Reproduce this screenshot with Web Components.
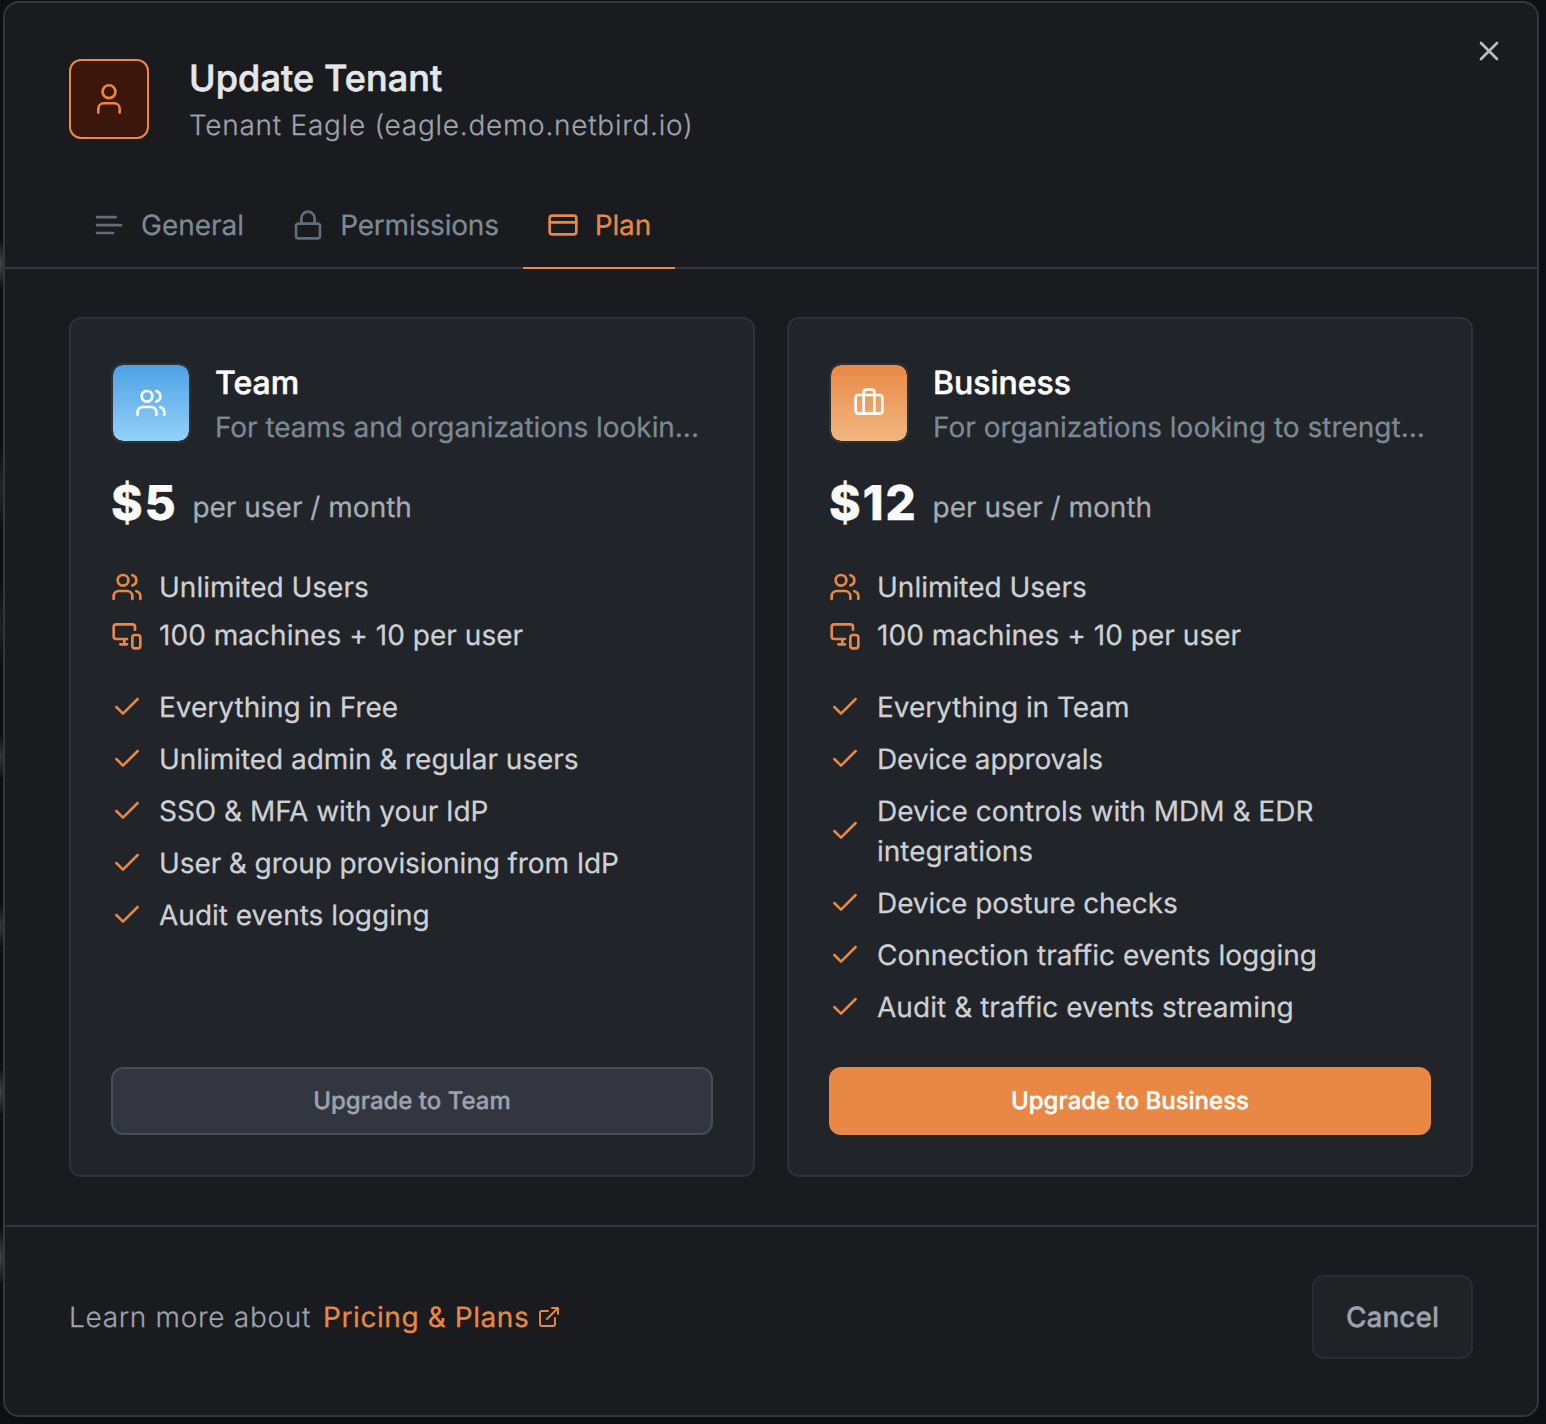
<!DOCTYPE html>
<html lang="en">
<head>
<meta charset="utf-8">
<title>Update Tenant</title>
<style>
html,body{margin:0;height:100%;background:#0e0f11;overflow:hidden}
body{font-family:Inter,"Liberation Sans",sans-serif;text-rendering:geometricPrecision;-webkit-text-stroke:.25px;color:#e4e7e9;box-sizing:border-box;padding:1px 7px 7px 3px;
background:
radial-gradient(ellipse 8px 24px at 0 264px,#48484a,transparent),
radial-gradient(ellipse 8px 40px at 0 488px,#252628,transparent),
radial-gradient(ellipse 8px 40px at 0 625px,#202123,transparent),
radial-gradient(ellipse 8px 22px at 0 757px,#38383a,transparent),
radial-gradient(ellipse 8px 22px at 0 926px,#38383a,transparent),
radial-gradient(ellipse 8px 24px at 0 1092px,#444446,transparent),
radial-gradient(ellipse 8px 28px at 0 1257px,#444446,transparent),
#0e0f11}
</style>
</head>
<body>
<nb-dialog>
  <dialog-header slot="header" heading="Update Tenant" description="Tenant Eagle (eagle.demo.netbird.io)"></dialog-header>
  <tab-bar slot="tabs">
    <tab-item icon="text">General</tab-item>
    <tab-item icon="lock" style="letter-spacing:-.2px">Permissions</tab-item>
    <tab-item icon="card" active style="letter-spacing:-.15px">Plan</tab-item>
  </tab-bar>
  <plan-card heading="Team" tone="blue" icon="users" price="$5" description="For teams and organizations lookin..." style="--track:-.05px">
    <plan-feature icon="users" slot="limits">Unlimited Users</plan-feature>
    <plan-feature icon="devices" slot="limits" style="letter-spacing:.04px">100 machines + 10 per user</plan-feature>
    <plan-feature icon="check">Everything in Free</plan-feature>
    <plan-feature icon="check" style="letter-spacing:-.05px">Unlimited admin &amp; regular users</plan-feature>
    <plan-feature icon="check" style="letter-spacing:-.04px">SSO &amp; MFA with your IdP</plan-feature>
    <plan-feature icon="check" style="letter-spacing:-.1px">User &amp; group provisioning from IdP</plan-feature>
    <plan-feature icon="check">Audit events logging</plan-feature>
    <nb-button slot="action" kind="secondary">Upgrade to Team</nb-button>
  </plan-card>
  <plan-card heading="Business" tone="orange" icon="briefcase" price="$12" description="For organizations looking to strengt...">
    <plan-feature icon="users" slot="limits">Unlimited Users</plan-feature>
    <plan-feature icon="devices" slot="limits" style="letter-spacing:.04px">100 machines + 10 per user</plan-feature>
    <plan-feature icon="check" style="letter-spacing:-.06px">Everything in Team</plan-feature>
    <plan-feature icon="check" style="letter-spacing:-.12px">Device approvals</plan-feature>
    <plan-feature icon="check">Device controls with MDM &amp; EDR integrations</plan-feature>
    <plan-feature icon="check" style="letter-spacing:-.08px">Device posture checks</plan-feature>
    <plan-feature icon="check" style="letter-spacing:.02px">Connection traffic events logging</plan-feature>
    <plan-feature icon="check" style="letter-spacing:.05px">Audit &amp; traffic events streaming</plan-feature>
    <nb-button slot="action" kind="primary">Upgrade to Business</nb-button>
  </plan-card>
  <dialog-footer slot="footer"></dialog-footer>
</nb-dialog>
<script>
const ICONS = {
  user: '<circle cx="12" cy="6.5" r="4.800"/><path d="M20 22.200v-3a4 4 0 0 0-4-4H8a4 4 0 0 0-4 4v3"/>',
  text: '<path d="M17 6.100H3M21 12.100H3M15.100 18H3"/>',
  lock: '<rect width="18" height="11" x="3" y="11" rx="2"/><path d="M7 11V7a5 5 0 0 1 10 0v4"/>',
  card: '<rect width="20" height="14" x="2" y="5" rx="2"/><path d="M2 10h20"/>',
  users: '<path d="M16 21v-2a4 4 0 0 0-4-4H6a4 4 0 0 0-4 4v2"/><circle cx="9" cy="7" r="4"/><path d="M22 21v-2a4 4 0 0 0-3-3.870M16 3.130a4 4 0 0 1 0 7.750"/>',
  devices: '<path d="M18 8V6a2 2 0 0 0-2-2H4a2 2 0 0 0-2 2v7a2 2 0 0 0 2 2h8M10 19v-4M7 19h5"/><rect x="16" y="12" width="6" height="10" rx="2"/>',
  check: '<path d="M20 6 9 17l-5-5"/>',
  briefcase: '<rect width="20" height="14" x="2" y="6" rx="2"/><path d="M16 20V4a2 2 0 0 0-2-2h-4a2 2 0 0 0-2 2v16"/>',
  external: '<path d="M18 13v6a2 2 0 0 1-2 2H5a2 2 0 0 1-2-2V8a2 2 0 0 1 2-2h6M15 3h6v6M10 14 21 3"/>',
  close: '<path d="M18 6 6 18M6 6l12 12"/>'
};
function define(name, render) {
  customElements.define(name, class extends HTMLElement {
    connectedCallback() {
      if (this.shadowRoot) return;
      this.attachShadow({mode: 'open'}).innerHTML = render(this);
    }
  });
}
define('nb-icon', el => `
<style>:host{display:block;flex:none;width:var(--size,32px);height:var(--size,32px)}svg{display:block;width:100%;height:100%}</style>
<svg viewBox="0 0 24 24" fill="none" stroke="currentColor" stroke-width="${el.getAttribute('stroke') || 2}" stroke-linecap="round" stroke-linejoin="round">${ICONS[el.getAttribute('name')]}</svg>`);

define('nb-dialog', () => `
<style>
:host{display:flex;flex-direction:column;box-sizing:border-box;width:1536px;height:1416px;border:2px solid #35363d;border-radius:16px;background:#1a1b1e;position:relative}
.plans{display:grid;grid-template-columns:1fr 1fr;gap:32px;padding:48px 64px;height:860px}
nb-icon{position:absolute;right:32px;top:32px;color:#bcbdbe}
</style>
<slot name="header"></slot><slot name="tabs"></slot>
<div class="plans"><slot></slot></div>
<slot name="footer"></slot><nb-icon name="close"></nb-icon>`);

define('dialog-header', el => `
<style>
:host{display:flex;gap:40px;padding:56px 64px 0;height:124px}
.badge{display:flex;align-items:center;justify-content:center;box-sizing:border-box;width:80px;height:80px;border:2px solid #e98845;border-radius:12px;background:#3d160b;color:#e98845}
h2{margin:-1px 0 0;font-size:36px;line-height:40px;font-weight:500;letter-spacing:.1px;-webkit-text-stroke:.6px}
p{margin:7px 0 0;font-size:28px;line-height:40px;font-weight:300;letter-spacing:.73px;color:#9ca3af}
</style>
<div class="badge"><nb-icon name="user"></nb-icon></div>
<div><h2>${el.getAttribute('heading')}</h2><p>${el.getAttribute('description')}</p></div>`);

define('tab-bar', () => `
<style>:host{display:flex;height:84px;padding:0 64px;border-bottom:2px solid #35363d}</style><slot></slot>`);
define('tab-item', el => `
<style>
:host{display:flex;align-items:center;gap:16px;height:84px;padding:0 24px;border-bottom:2px solid transparent;color:#7c8994;font-size:28px;line-height:40px;font-weight:400}
nb-icon{color:#616e79}
:host([active]){color:#e98845;border-color:#e98845}
:host([active]) nb-icon{color:inherit}
</style>
<nb-icon name="${el.getAttribute('icon')}"></nb-icon><span><slot></slot></span>`);

define('plan-card', el => `
<style>
:host{display:flex;flex-direction:column;box-sizing:border-box;min-width:0;border:2px solid #2e3137;border-radius:12px;background:#212428;padding:44px 40px 40px}
header{display:flex;gap:24px;height:80px}
.badge{flex:none;display:flex;align-items:center;justify-content:center;box-sizing:border-box;width:80px;height:80px;border:2px solid #2e3137;border-radius:12px;color:#fff;background:linear-gradient(#4da2e4,#94d1fa) padding-box}
:host([tone=orange]) .badge{background:linear-gradient(#e98845,#f0b780) padding-box}
h3{margin:0;font-size:32px;line-height:40px;font-weight:500;color:#fff;-webkit-text-stroke:.5px}
header p{margin:4px 0 0;font-size:28px;line-height:40px;letter-spacing:var(--track,0);color:#7c8994;white-space:nowrap}
.price{display:flex;align-items:flex-start;gap:15px;margin-top:30px;height:60px}
.price b{font-size:48px;line-height:60px;font-weight:800;letter-spacing:1.7px;color:#fafafa}
.price span{margin-top:14px;font-size:28px;line-height:40px;color:#a3adb5}
.limits{display:flex;flex-direction:column;gap:8px;margin-top:34px}
.features{display:flex;flex-direction:column;gap:12px;margin-top:32px}
.action{margin-top:auto}
</style>
<header><div class="badge"><nb-icon name="${el.getAttribute('icon')}"></nb-icon></div>
<div><h3>${el.getAttribute('heading')}</h3><p>${el.getAttribute('description')}</p></div></header>
<div class="price"><b>${el.getAttribute('price')}</b><span>per user / month</span></div>
<div class="limits"><slot name="limits"></slot></div>
<div class="features"><slot></slot></div>
<div class="action"><slot name="action"></slot></div>`);

define('plan-feature', el => `
<style>
:host{display:flex;align-items:center;gap:16px;font-size:28px;line-height:40px;color:#cdd0d4}
nb-icon{color:#e98845}
</style>
<nb-icon name="${el.getAttribute('icon')}" stroke="${el.getAttribute('icon') === 'check' ? 1.9 : 2}"></nb-icon><span><slot></slot></span>`);

define('nb-button', () => `
<style>
:host{display:flex;align-items:center;justify-content:center;box-sizing:border-box;height:68px;border:2px solid;border-radius:12px;font-size:24px;line-height:32px;font-weight:500;-webkit-text-stroke:.35px}
:host([kind=secondary]){background:#33363f;border-color:#474c56;color:#9ca3af}
:host([kind=primary]){background:#e98845;border-color:#e98845;color:#fff}
:host([kind=cancel]){width:161px;height:84px;background:#212226;border-color:#282d34;color:#9ca3af;font-size:28px}
</style><span><slot></slot></span>`);

define('dialog-footer', () => `
<style>
:host{display:flex;align-items:center;justify-content:space-between;padding:48px 64px;height:84px;border-top:2px solid #35363d}
p{display:flex;align-items:center;gap:12px;margin:0;font-size:28px;line-height:40px;font-weight:300;letter-spacing:.7px;color:#9ca3af}
a{display:flex;align-items:center;gap:8px;color:#e98845;font-weight:400;letter-spacing:.58px}
a nb-icon{--size:24px}
</style>
<p><span>Learn more about</span><a><span>Pricing &amp; Plans</span><nb-icon name="external" stroke="1.900"></nb-icon></a></p>
<nb-button kind="cancel">Cancel</nb-button>`);
</script>
</body>
</html>
